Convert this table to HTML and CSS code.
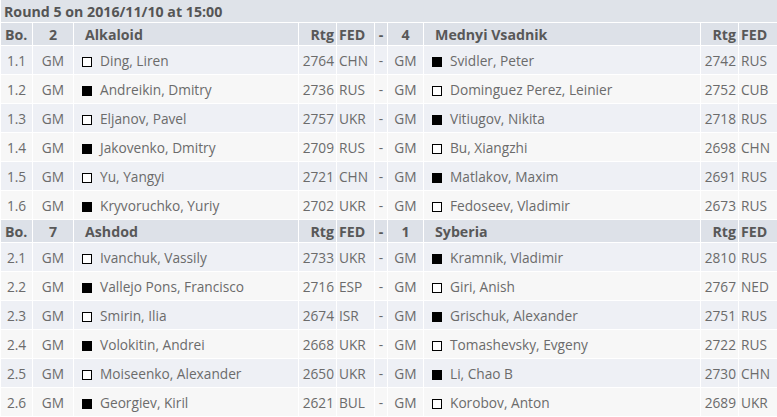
FILE: index.html
```html
<!DOCTYPE html>
<html>
<head>
<meta charset="utf-8">
<link rel="stylesheet" href="styles.css">
</head>
<body>
<table class="pairings">
  <colgroup>
    <col class="c-bo"><col class="c-tit"><col class="c-name"><col class="c-rtg"><col class="c-fed">
    <col class="c-dash"><col class="c-tit2"><col class="c-name2"><col class="c-rtg"><col class="c-fed2">
  </colgroup>
  <tr class="round"><td colspan="10">Round 5 on 2016/11/10 at 15:00</td></tr>
  <tr class="head">
    <td>Bo.</td><td class="ctr">2</td><td class="team">Alkaloid</td><td class="r">Rtg</td><td>FED</td>
    <td class="ctr">-</td><td class="ctr">4</td><td class="team">Mednyi Vsadnik</td><td class="r">Rtg</td><td>FED</td>
  </tr>
  <tr class="odd"><td class="ctr">1.1</td><td class="ctr">GM</td><td class="pl"><span class="sq w"></span>Ding, Liren</td><td class="r">2764</td><td>CHN</td><td class="ctr">-</td><td class="ctr">GM</td><td class="pl"><span class="sq b"></span>Svidler, Peter</td><td class="r">2742</td><td>RUS</td></tr>
  <tr class="even"><td class="ctr">1.2</td><td class="ctr">GM</td><td class="pl"><span class="sq b"></span>Andreikin, Dmitry</td><td class="r">2736</td><td>RUS</td><td class="ctr">-</td><td class="ctr">GM</td><td class="pl"><span class="sq w"></span>Dominguez Perez, Leinier</td><td class="r">2752</td><td>CUB</td></tr>
  <tr class="odd"><td class="ctr">1.3</td><td class="ctr">GM</td><td class="pl"><span class="sq w"></span>Eljanov, Pavel</td><td class="r">2757</td><td>UKR</td><td class="ctr">-</td><td class="ctr">GM</td><td class="pl"><span class="sq b"></span>Vitiugov, Nikita</td><td class="r">2718</td><td>RUS</td></tr>
  <tr class="even"><td class="ctr">1.4</td><td class="ctr">GM</td><td class="pl"><span class="sq b"></span>Jakovenko, Dmitry</td><td class="r">2709</td><td>RUS</td><td class="ctr">-</td><td class="ctr">GM</td><td class="pl"><span class="sq w"></span>Bu, Xiangzhi</td><td class="r">2698</td><td>CHN</td></tr>
  <tr class="odd"><td class="ctr">1.5</td><td class="ctr">GM</td><td class="pl"><span class="sq w"></span>Yu, Yangyi</td><td class="r">2721</td><td>CHN</td><td class="ctr">-</td><td class="ctr">GM</td><td class="pl"><span class="sq b"></span>Matlakov, Maxim</td><td class="r">2691</td><td>RUS</td></tr>
  <tr class="even"><td class="ctr">1.6</td><td class="ctr">GM</td><td class="pl"><span class="sq b"></span>Kryvoruchko, Yuriy</td><td class="r">2702</td><td>UKR</td><td class="ctr">-</td><td class="ctr">GM</td><td class="pl"><span class="sq w"></span>Fedoseev, Vladimir</td><td class="r">2673</td><td>RUS</td></tr>
  <tr class="head">
    <td>Bo.</td><td class="ctr">7</td><td class="team">Ashdod</td><td class="r">Rtg</td><td>FED</td>
    <td class="ctr">-</td><td class="ctr">1</td><td class="team">Syberia</td><td class="r">Rtg</td><td>FED</td>
  </tr>
  <tr class="odd"><td class="ctr">2.1</td><td class="ctr">GM</td><td class="pl"><span class="sq w"></span>Ivanchuk, Vassily</td><td class="r">2733</td><td>UKR</td><td class="ctr">-</td><td class="ctr">GM</td><td class="pl"><span class="sq b"></span>Kramnik, Vladimir</td><td class="r">2810</td><td>RUS</td></tr>
  <tr class="even"><td class="ctr">2.2</td><td class="ctr">GM</td><td class="pl"><span class="sq b"></span>Vallejo Pons, Francisco</td><td class="r">2716</td><td>ESP</td><td class="ctr">-</td><td class="ctr">GM</td><td class="pl"><span class="sq w"></span>Giri, Anish</td><td class="r">2767</td><td>NED</td></tr>
  <tr class="odd"><td class="ctr">2.3</td><td class="ctr">GM</td><td class="pl"><span class="sq w"></span>Smirin, Ilia</td><td class="r">2674</td><td>ISR</td><td class="ctr">-</td><td class="ctr">GM</td><td class="pl"><span class="sq b"></span>Grischuk, Alexander</td><td class="r">2751</td><td>RUS</td></tr>
  <tr class="even"><td class="ctr">2.4</td><td class="ctr">GM</td><td class="pl"><span class="sq b"></span>Volokitin, Andrei</td><td class="r">2668</td><td>UKR</td><td class="ctr">-</td><td class="ctr">GM</td><td class="pl"><span class="sq w"></span>Tomashevsky, Evgeny</td><td class="r">2722</td><td>RUS</td></tr>
  <tr class="odd"><td class="ctr">2.5</td><td class="ctr">GM</td><td class="pl"><span class="sq w"></span>Moiseenko, Alexander</td><td class="r">2650</td><td>UKR</td><td class="ctr">-</td><td class="ctr">GM</td><td class="pl"><span class="sq b"></span>Li, Chao B</td><td class="r">2730</td><td>CHN</td></tr>
  <tr class="even"><td class="ctr">2.6</td><td class="ctr">GM</td><td class="pl"><span class="sq b"></span>Georgiev, Kiril</td><td class="r">2621</td><td>BUL</td><td class="ctr">-</td><td class="ctr">GM</td><td class="pl"><span class="sq w"></span>Korobov, Anton</td><td class="r">2689</td><td>UKR</td></tr>
</table>
</body>
</html>
```
FILE: styles.css
```css
html, body {
  margin: 0;
  padding: 0;
  background: #ffffff;
}
.pairings {
  width: 777px;
  border-collapse: collapse;
  table-layout: fixed;
  font-family: "Open Sans", "Noto Sans", sans-serif;
  font-size: 13.7px;
  color: #6b6b6b;
}
.c-bo { width: 32px; }
.c-tit { width: 41px; }
.c-name { width: 225px; }
.c-rtg { width: 38px; }
.c-fed { width: 38px; }
.c-dash { width: 13px; }
.c-tit2 { width: 36px; }
.c-name2 { width: 277px; }
.c-fed2 { width: 39px; }
.pairings td {
  border: 1px solid #ffffff;
  padding: 0 2px;
  white-space: nowrap;
  overflow: hidden;
}
.round td {
  height: 22px;
  background: #dfe3e9;
  font-weight: bold;
  font-size: 14.2px;
  color: #555555;
  padding-left: 3px;
  border-top: 0;
}
.head td {
  height: 22px;
  background: #dde1e8;
  font-weight: bold;
  font-size: 14.2px;
  color: #585858;
}
.head td:first-child { padding-left: 4px; }
.odd td {
  height: 28px;
  background: #eef0f5;
}
.even td {
  height: 28px;
  background: #f7f7f7;
}
.ctr { text-align: center; }
.r { text-align: right; }
.pairings td.team { padding-left: 11px; }
.pairings td.pl { padding-left: 8px; }
.sq {
  display: inline-block;
  width: 8px;
  height: 8px;
  border: 1px solid #000000;
  margin-right: 8px;
  vertical-align: -1px;
}
.sq.w { background: #ffffff; }
.sq.b { background: #000000; }
```
